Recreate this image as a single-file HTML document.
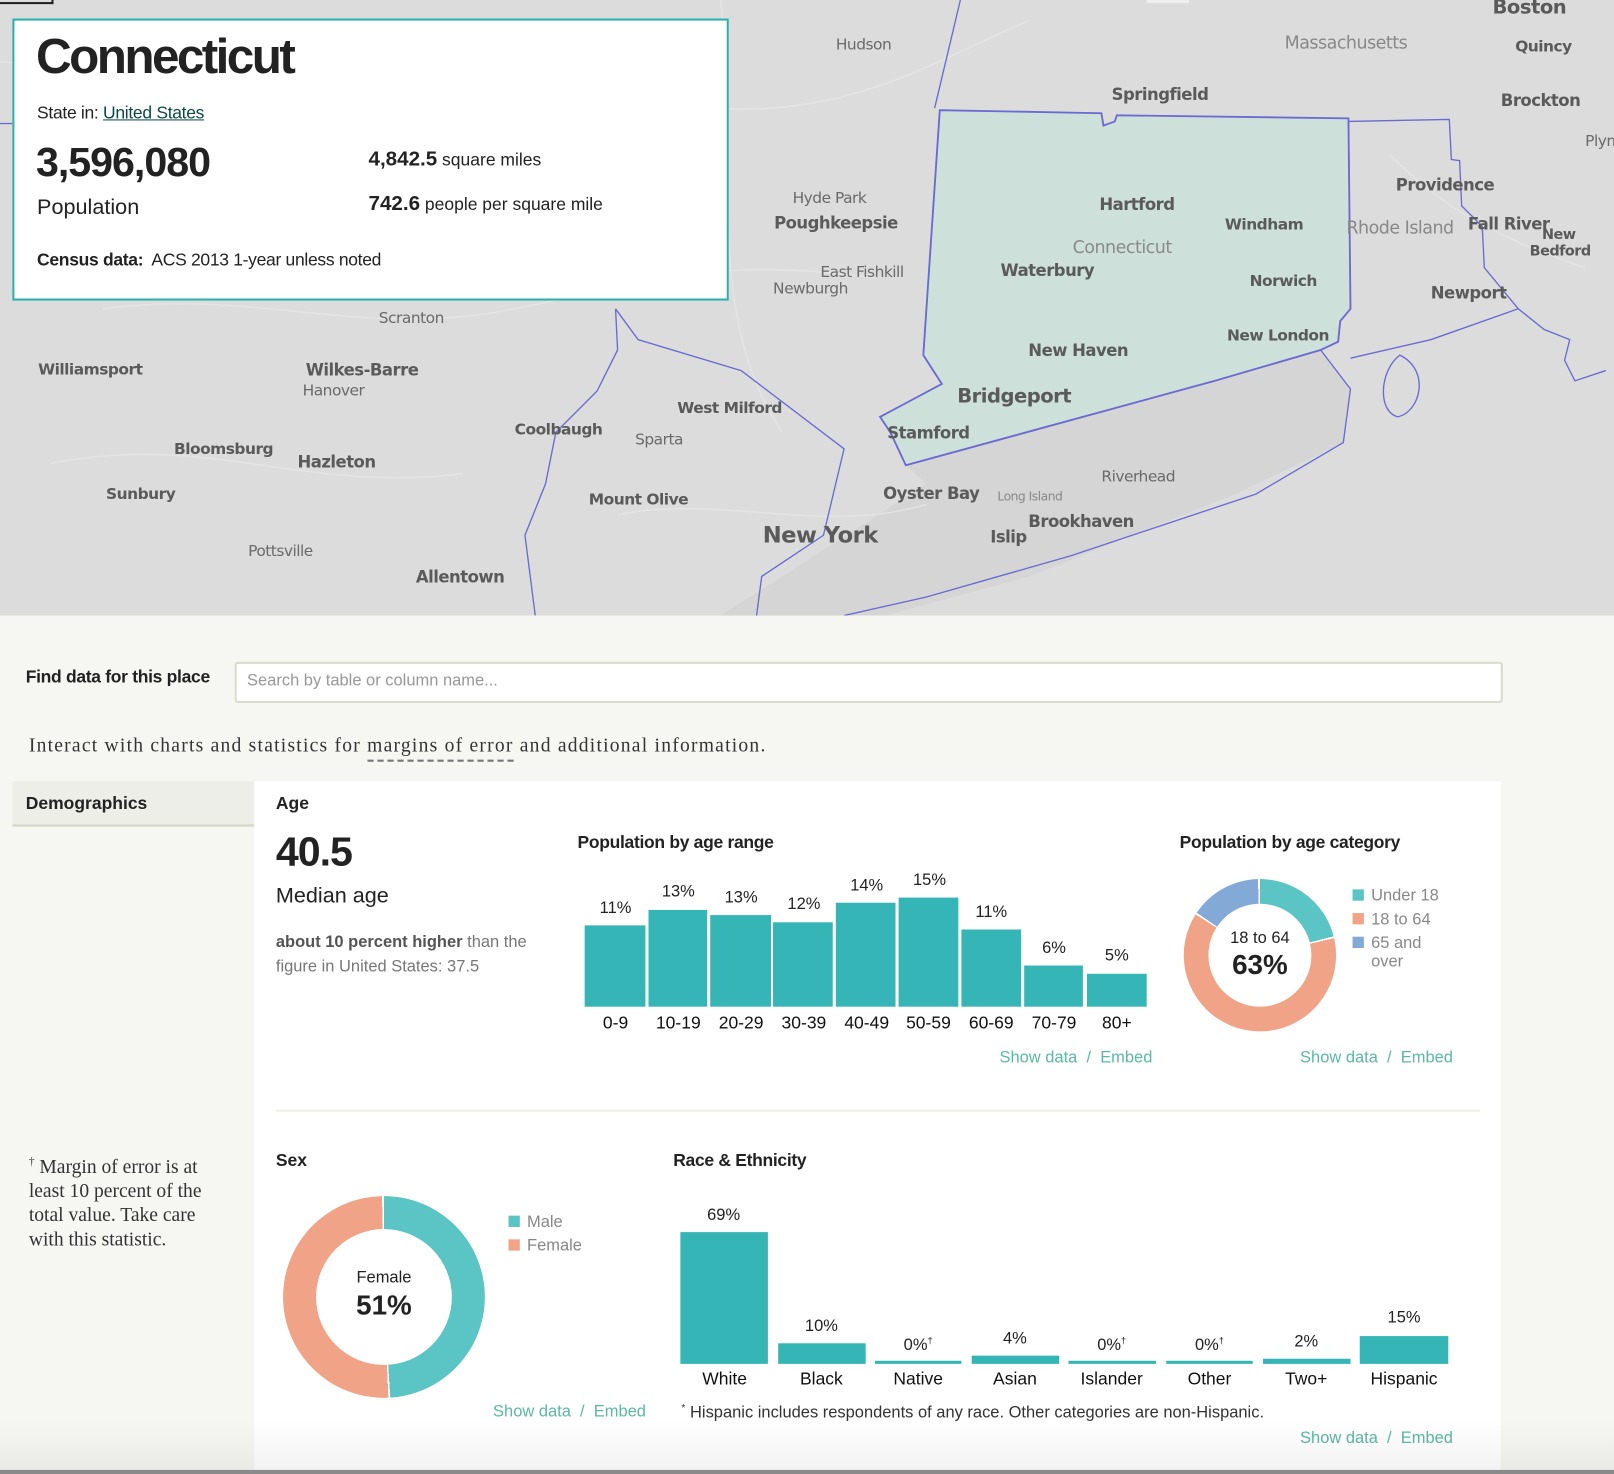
<!DOCTYPE html>
<html><head><meta charset="utf-8">
<style>
html,body{margin:0;padding:0;width:1614px;height:1474px;overflow:hidden;background:#f6f6f2;}
#s{position:absolute;left:0;top:0;width:1568px;height:1432px;transform:scale(1.02934);transform-origin:0 0;font-family:"Liberation Sans",sans-serif;color:#222;background:#f6f6f2;}
.a{position:absolute;white-space:nowrap;}
.map{position:absolute;left:0;top:0;width:1568px;height:598px;background:#dcdcdc;overflow:hidden}
.ml{position:absolute;white-space:nowrap;font-size:15px;color:#6a6a6a;font-family:"DejaVu Sans",sans-serif;letter-spacing:-0.5px}
.ml.b{font-weight:bold;color:#5a5a5a}
.lnk{color:#5bb8a3;font-size:16px}
.bar{position:absolute;background:#35b5b5;}
.pct{position:absolute;font-size:16px;color:#222;text-align:center;width:60px}
.lab{position:absolute;font-size:17px;color:#111;text-align:center;width:70px}
.sw{display:inline-block;width:11px;height:11px;margin-right:7px}
</style></head><body>
<div id="s">
<div class="map">
<svg width="1568" height="598" style="position:absolute;left:0;top:0">
<path d="M880 452 L1180 370 L1283 340 L1312 380 L1305 430 L1200 480 L1000 560 L860 598 L700 598 L760 560 L900 470Z" fill="#d5d5d5"/>
<g stroke="#e6e6e6" stroke-width="1.5" fill="none" opacity="0.8">
<path d="M0 60 C200 80 400 40 600 90 S900 60 1000 20"/><path d="M100 300 C250 280 350 330 500 300 S700 250 850 270"/>
<path d="M50 450 C200 420 300 480 450 460"/><path d="M600 500 C700 480 800 520 900 490"/>
<path d="M1350 150 C1400 200 1450 230 1540 260"/><path d="M700 0 C720 150 680 300 760 420"/>
</g>
<path d="M913 107 L1070 110 L1072 122 L1083 118 L1085 112 L1310 115 L1312 300 L1302 312 L1300 332 L1283 340 L1180 370 L880 452 L865 420 L855 405 L915 373 L897 345 Z" fill="#cde0da" stroke="#6a6ad0" stroke-width="1.8"/>
<g stroke="#6a6ad0" stroke-width="1.3" fill="none">
<path d="M933 0 L908 105"/>
<path d="M1310 118 L1408 116 L1410 155 L1418 156 L1420 200 L1440 220 L1442 260 L1475 300"/>
<path d="M1283 340 L1312 378 L1305 430 L1220 480 L1040 540 L900 580 L820 598"/>
<path d="M1312 348 L1390 330 L1475 300 L1500 320 L1525 330 L1520 350 L1530 370 L1560 360"/>
<path d="M1360 345 C1340 360 1338 400 1358 405 C1380 400 1390 360 1360 345Z"/>
<path d="M598 300 L620 330 L720 360 L820 436 L800 520 L740 560 L735 598"/>
<path d="M598 300 L600 340 L580 380 L540 420 L530 470 L510 520 L520 598"/>
<path d="M0 120 L12 120"/>
</g>
</svg>
<div class="ml" style="left:1114px;top:-8px;font-size:10px;background:#eee;padding:0 3px">MA 116</div>
<div class="ml b" style="left:1450px;top:-4px;font-size:19px">Boston</div>
<div class="ml" style="left:812px;top:34px">Hudson</div>
<div class="ml" style="left:1248px;top:32px;font-size:17px;color:#888">Massachusetts</div>
<div class="ml b" style="left:1472px;top:36px">Quincy</div>
<div class="ml b" style="left:1080px;top:82px;font-size:16px">Springfield</div>
<div class="ml b" style="left:1458px;top:88px;font-size:16px">Brockton</div>
<div class="ml" style="left:1540px;top:128px">Plym</div>
<div class="ml" style="left:770px;top:183px">Hyde Park</div>
<div class="ml b" style="left:752px;top:207px;font-size:16px">Poughkeepsie</div>
<div class="ml b" style="left:1068px;top:189px;font-size:16px">Hartford</div>
<div class="ml b" style="left:1356px;top:170px;font-size:16px">Providence</div>
<div class="ml b" style="left:1190px;top:209px">Windham</div>
<div class="ml" style="left:1308px;top:212px;font-size:17px;color:#888">Rhode Island</div>
<div class="ml b" style="left:1426px;top:208px;font-size:16px">Fall River</div>
<div class="ml b" style="left:1498px;top:220px;font-size:14px">New</div>
<div class="ml b" style="left:1486px;top:236px;font-size:14px">Bedford</div>
<div class="ml" style="left:1042px;top:231px;font-size:17px;color:#8a8a8a">Connecticut</div>
<div class="ml" style="left:797px;top:255px">East Fishkill</div>
<div class="ml" style="left:751px;top:271px">Newburgh</div>
<div class="ml b" style="left:972px;top:253px;font-size:16px">Waterbury</div>
<div class="ml b" style="left:1214px;top:264px">Norwich</div>
<div class="ml b" style="left:1390px;top:275px;font-size:16px">Newport</div>
<div class="ml" style="left:368px;top:300px">Scranton</div>
<div class="ml b" style="left:1192px;top:317px">New London</div>
<div class="ml b" style="left:999px;top:331px;font-size:16px">New Haven</div>
<div class="ml b" style="left:37px;top:350px">Williamsport</div>
<div class="ml b" style="left:297px;top:350px;font-size:16px">Wilkes-Barre</div>
<div class="ml" style="left:294px;top:370px">Hanover</div>
<div class="ml b" style="left:930px;top:374px;font-size:19px">Bridgeport</div>
<div class="ml b" style="left:658px;top:387px">West Milford</div>
<div class="ml b" style="left:500px;top:408px">Coolbaugh</div>
<div class="ml b" style="left:862px;top:411px;font-size:16px">Stamford</div>
<div class="ml" style="left:617px;top:418px">Sparta</div>
<div class="ml b" style="left:169px;top:427px">Bloomsburg</div>
<div class="ml b" style="left:289px;top:439px;font-size:16px">Hazleton</div>
<div class="ml" style="left:1070px;top:454px">Riverhead</div>
<div class="ml b" style="left:858px;top:470px;font-size:16px">Oyster Bay</div>
<div class="ml b" style="left:103px;top:471px">Sunbury</div>
<div class="ml" style="left:969px;top:475px;font-size:12px;color:#888">Long Island</div>
<div class="ml b" style="left:572px;top:476px">Mount Olive</div>
<div class="ml b" style="left:999px;top:497px;font-size:16px">Brookhaven</div>
<div class="ml b" style="left:741px;top:508px;font-size:22px">New York</div>
<div class="ml b" style="left:962px;top:512px;font-size:16px">Islip</div>
<div class="ml" style="left:241px;top:526px">Pottsville</div>
<div class="ml b" style="left:404px;top:551px;font-size:16px">Allentown</div>
<div class="a" style="left:0;top:-2px;width:50px;height:4px;border:2px solid #222;border-top:none;border-left:none"></div>
</div>
<!-- info box -->
<div class="a" style="left:12px;top:18px;width:692px;height:270px;background:#fff;border:2px solid #2cb0ac;"></div>
<div class="a" style="left:35px;top:28px;font-size:48px;font-weight:bold;color:#222;letter-spacing:-2.5px">Connecticut</div>
<div class="a" style="left:36px;top:100px;font-size:17px;letter-spacing:-0.3px">State in: <span style="color:#0b4a44;text-decoration:underline">United States</span></div>
<div class="a" style="left:35px;top:136px;font-size:40px;font-weight:bold;letter-spacing:-1px">3,596,080</div>
<div class="a" style="left:36px;top:190px;font-size:21px">Population</div>
<div class="a" style="left:358px;top:144px;font-size:17px"><b style="font-size:20px">4,842.5</b> square miles</div>
<div class="a" style="left:358px;top:187px;font-size:17px"><b style="font-size:20px">742.6</b> people per square mile</div>
<div class="a" style="left:36px;top:243px;font-size:17px;letter-spacing:-0.3px"><b>Census data:</b>&nbsp; ACS 2013 1-year unless noted</div>

<!-- search -->
<div class="a" style="left:25px;top:648px;font-size:17px;font-weight:bold;letter-spacing:-0.3px">Find data for this place</div>
<div class="a" style="left:228px;top:643px;width:1228px;height:36px;border:2px solid #d8dccb;border-radius:3px;background:#fff"></div>
<div class="a" style="left:240px;top:653px;font-size:16px;color:#999">Search by table or column name...</div>
<div class="a" style="left:28px;top:714px;font-size:19px;font-family:'Liberation Serif',serif;color:#333;letter-spacing:1.2px">Interact with charts and statistics for <span style="border-bottom:2px dashed #777;padding-bottom:3px">margins of error</span> and additional information.</div>

<!-- tab & panel -->
<div class="a" style="left:12px;top:759px;width:235px;height:42px;background:#eeeee8;border-bottom:2px solid #d4d6c2"></div>
<div class="a" style="left:25px;top:771px;font-size:17px;font-weight:bold">Demographics</div>
<div class="a" style="left:247px;top:759px;width:1211px;height:673px;background:#fff"></div>
<div class="a" style="left:268px;top:771px;font-size:17px;font-weight:bold">Age</div>
<div class="a" style="left:268px;top:806px;font-size:40px;font-weight:bold;letter-spacing:-1px">40.5</div>
<div class="a" style="left:268px;top:859px;font-size:21px">Median age</div>
<div class="a" style="left:268px;top:904px;font-size:16px;color:#777;line-height:24px"><b style="color:#555">about 10 percent higher</b> than the<br>figure in United States: 37.5</div>

<div class="a" style="left:561px;top:809px;font-size:17px;font-weight:bold;letter-spacing:-0.3px">Population by age range</div>
<div class="bar" style="left:568px;top:899px;width:59px;height:79px"></div>
<div class="bar" style="left:630px;top:884px;width:57px;height:94px"></div>
<div class="bar" style="left:690px;top:889px;width:59px;height:89px"></div>
<div class="bar" style="left:751px;top:896px;width:58px;height:82px"></div>
<div class="bar" style="left:812px;top:877px;width:58px;height:101px"></div>
<div class="bar" style="left:873px;top:872px;width:58px;height:106px"></div>
<div class="bar" style="left:934px;top:903px;width:58px;height:75px"></div>
<div class="bar" style="left:995px;top:938px;width:57px;height:40px"></div>
<div class="bar" style="left:1056px;top:946px;width:58px;height:32px"></div>
<div class="pct" style="left:568px;top:874px">11%</div>
<div class="pct" style="left:629px;top:858px">13%</div>
<div class="pct" style="left:690px;top:864px">13%</div>
<div class="pct" style="left:751px;top:870px">12%</div>
<div class="pct" style="left:812px;top:852px">14%</div>
<div class="pct" style="left:873px;top:847px">15%</div>
<div class="pct" style="left:933px;top:878px">11%</div>
<div class="pct" style="left:994px;top:913px">6%</div>
<div class="pct" style="left:1055px;top:920px">5%</div>
<div class="lab" style="left:563px;top:984px">0-9</div>
<div class="lab" style="left:624px;top:984px">10-19</div>
<div class="lab" style="left:685px;top:984px">20-29</div>
<div class="lab" style="left:746px;top:984px">30-39</div>
<div class="lab" style="left:807px;top:984px">40-49</div>
<div class="lab" style="left:867px;top:984px">50-59</div>
<div class="lab" style="left:928px;top:984px">60-69</div>
<div class="lab" style="left:989px;top:984px">70-79</div>
<div class="lab" style="left:1050px;top:984px">80+</div>
<div class="a lnk" style="left:971px;top:1019px">Show data&nbsp; / &nbsp;Embed</div>

<div class="a" style="left:1146px;top:809px;font-size:17px;font-weight:bold;letter-spacing:-0.3px">Population by age category</div>
<div class="a" style="left:1150px;top:854px;width:148px;height:148px;border-radius:50%;background:conic-gradient(#5bc4c4 0 21%,#fff 21% 21.4%,#f0a386 21.4% 84%,#fff 84% 84.4%,#83a9d6 84.4% 99.6%,#fff 99.6%)"></div>
<div class="a" style="left:1174px;top:878px;width:100px;height:100px;border-radius:50%;background:#fff"></div>
<div class="a" style="left:1174px;top:903px;width:100px;text-align:center;font-size:16px">18 to 64</div>
<div class="a" style="left:1174px;top:922px;width:100px;text-align:center;font-size:27px;font-weight:bold">63%</div>
<div class="a" style="left:1314px;top:859px;font-size:16px;color:#888;line-height:23px;white-space:normal;width:90px">
<div><span class="sw" style="background:#5bc4c4"></span>Under 18</div>
<div><span class="sw" style="background:#f0a386"></span>18 to 64</div>
<div style="line-height:18px;margin-top:3px"><span class="sw" style="background:#83a9d6"></span>65 and<br><span style="margin-left:18px">over</span></div>
</div>
<div class="a lnk" style="left:1263px;top:1019px">Show data&nbsp; / &nbsp;Embed</div>

<div class="a" style="left:268px;top:1078px;width:1170px;height:2px;background:#eeeee8"></div>

<div class="a" style="left:28px;top:1118px;font-size:19px;font-family:'Liberation Serif',serif;color:#333;line-height:23.5px;white-space:normal;width:200px"><sup style="font-size:11px">†</sup> Margin of error is at least 10 percent of the total value. Take care with this statistic.</div>

<div class="a" style="left:268px;top:1118px;font-size:17px;font-weight:bold">Sex</div>
<div class="a" style="left:275px;top:1162px;width:196px;height:196px;border-radius:50%;background:conic-gradient(#5bc4c4 0 49%,#fff 49% 49.3%,#f0a386 49.3% 99.7%,#fff 99.7%)"></div>
<div class="a" style="left:307px;top:1194px;width:132px;height:132px;border-radius:50%;background:#fff"></div>
<div class="a" style="left:307px;top:1233px;width:132px;text-align:center;font-size:16px">Female</div>
<div class="a" style="left:307px;top:1253px;width:132px;text-align:center;font-size:27px;font-weight:bold">51%</div>
<div class="a" style="left:494px;top:1176px;font-size:16px;color:#888;line-height:23px">
<div><span class="sw" style="background:#5bc4c4"></span>Male</div>
<div><span class="sw" style="background:#f0a386"></span>Female</div></div>
<div class="a lnk" style="left:479px;top:1363px">Show data&nbsp; / &nbsp;Embed</div>

<div class="a" style="left:654px;top:1118px;font-size:17px;font-weight:bold;letter-spacing:-0.3px">Race &amp; Ethnicity</div>
<div class="bar" style="left:661px;top:1197px;width:85px;height:128px"></div>
<div class="bar" style="left:756px;top:1305px;width:85px;height:20px"></div>
<div class="bar" style="left:850px;top:1322px;width:84px;height:3px"></div>
<div class="bar" style="left:944px;top:1317px;width:85px;height:8px"></div>
<div class="bar" style="left:1038px;top:1322px;width:85px;height:3px"></div>
<div class="bar" style="left:1133px;top:1322px;width:84px;height:3px"></div>
<div class="bar" style="left:1227px;top:1320px;width:85px;height:5px"></div>
<div class="bar" style="left:1321px;top:1298px;width:86px;height:27px"></div>
<div class="pct" style="left:673px;top:1172px">69%</div>
<div class="pct" style="left:768px;top:1280px">10%</div>
<div class="pct" style="left:862px;top:1297px">0%<sup style="font-size:9px">†</sup></div>
<div class="pct" style="left:956px;top:1292px">4%</div>
<div class="pct" style="left:1050px;top:1297px">0%<sup style="font-size:9px">†</sup></div>
<div class="pct" style="left:1145px;top:1297px">0%<sup style="font-size:9px">†</sup></div>
<div class="pct" style="left:1239px;top:1295px">2%</div>
<div class="pct" style="left:1334px;top:1272px">15%</div>
<div class="lab" style="left:668px;top:1330px;width:72px">White</div>
<div class="lab" style="left:762px;top:1330px;width:72px">Black</div>
<div class="lab" style="left:856px;top:1330px;width:72px">Native</div>
<div class="lab" style="left:950px;top:1330px;width:72px">Asian</div>
<div class="lab" style="left:1044px;top:1330px;width:72px">Islander</div>
<div class="lab" style="left:1139px;top:1330px;width:72px">Other</div>
<div class="lab" style="left:1233px;top:1330px;width:72px">Two+</div>
<div class="lab" style="left:1328px;top:1330px;width:72px">Hispanic</div>
<div class="a" style="left:662px;top:1363px;font-size:16px;color:#333"><sup style="font-size:10px">*</sup> Hispanic includes respondents of any race. Other categories are non-Hispanic.</div>
<div class="a lnk" style="left:1263px;top:1389px">Show data&nbsp; / &nbsp;Embed</div>
<div class="a" style="left:0;top:1380px;width:1568px;height:48px;background:linear-gradient(rgba(0,0,0,0),rgba(0,0,0,0.05))"></div>
<div class="a" style="left:0;top:1428px;width:1568px;height:4px;background:#8a8a8a"></div>
</div>
</body></html>
